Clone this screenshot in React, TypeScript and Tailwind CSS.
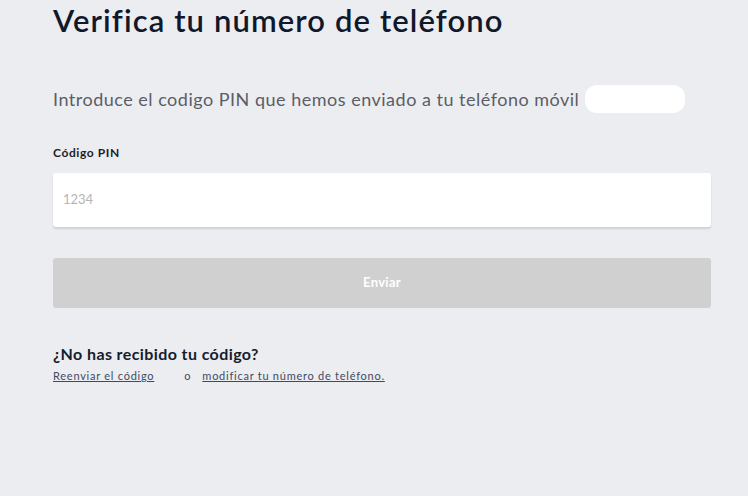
import React from 'react';

export default function App() {
  return (
    <div
      className="w-[748px] h-[496px] overflow-hidden bg-[#ecedf1] text-[#10182b]"
      style={{ fontFamily: 'Lato, "Open Sans", sans-serif' }}
    >
      <div className="w-[658px] ml-[53px] flex flex-col">
        <h1 className="text-[31px] leading-[36px] font-semibold mt-[2px] tracking-[1.1px]">
          Verifica tu número de teléfono
        </h1>

        <div className="mt-[46px] flex items-center h-[30px]">
          <p className="text-[18px] text-[#5b5d66] leading-[24px] tracking-[0.5px]">
            Introduce el codigo PIN que hemos enviado a tu teléfono móvil
          </p>
          <span className="ml-[6px] w-[100px] h-[28px] bg-white rounded-[12px]" />
        </div>

        <label className="mt-[31px] text-[12px] font-bold leading-[16px] text-[#1b1f2a] tracking-[0.6px]">
          Código PIN
        </label>

        <div className="mt-[12px] h-[54px] bg-white rounded-[3px] shadow-[0_2px_2px_rgba(0,0,0,0.12)] flex items-center px-[10px]">
          <span className="text-[13px] text-[#b5b5b5]">1234</span>
        </div>

        <button
          type="button"
          className="mt-[31px] h-[50px] w-full bg-[#d0d0d0] rounded-[3px] text-white text-[13px] font-bold tracking-[0.3px]"
        >
          Enviar
        </button>

        <h2 className="mt-[36px] text-[16px] leading-[20px] font-bold text-[#151c2e] tracking-[0.4px]">
          ¿No has recibido tu código?
        </h2>
        <div className="mt-[5px] flex items-center text-[11px] text-[#3d4a63] leading-[14px] tracking-[0.75px]">
          <a className="underline">Reenviar el código</a>
          <span className="ml-[30px]">o</span>
          <a className="ml-[11px] underline">modificar tu número de teléfono.</a>
        </div>
      </div>
    </div>
  );
}
